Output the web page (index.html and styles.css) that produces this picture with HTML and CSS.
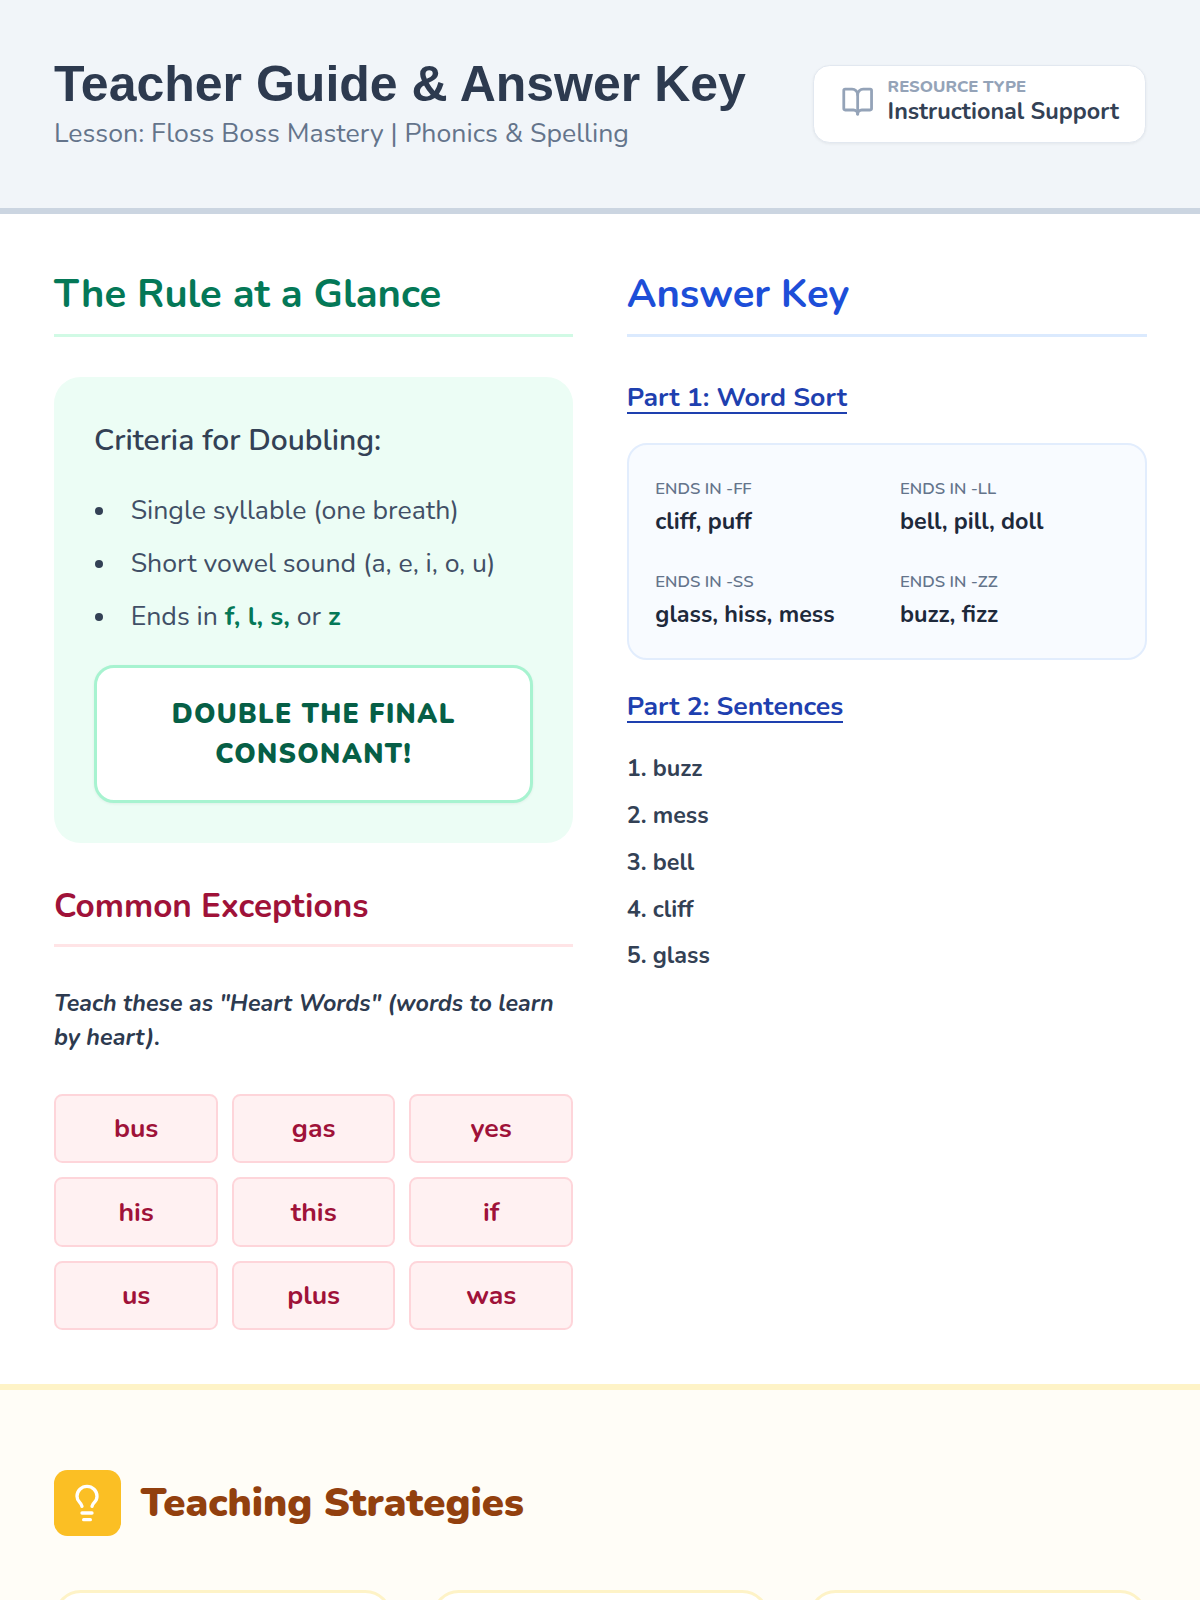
FILE: index.html
```html
<!DOCTYPE html>
<html lang="en">
<head>
<meta charset="utf-8">
<title>Teacher Guide</title>
<link rel="stylesheet" href="styles.css">
</head>
<body>
<header class="header">
  <div class="header-text">
    <h1 class="title">Teacher Guide &amp; Answer Key</h1>
    <p class="subtitle">Lesson: Floss Boss Mastery | Phonics &amp; Spelling</p>
  </div>
  <div class="badge">
    <svg class="badge-icon" viewBox="0 0 24 24" fill="none" stroke="currentColor" stroke-width="2" stroke-linecap="round" stroke-linejoin="round"><path d="M12 7v14"/><path d="M3 18a1 1 0 0 1-1-1V4a1 1 0 0 1 1-1h5a4 4 0 0 1 4 4 4 4 0 0 1 4-4h5a1 1 0 0 1 1 1v13a1 1 0 0 1-1 1h-6a3 3 0 0 0-3 3 3 3 0 0 0-3-3z"/></svg>
    <div>
      <div class="badge-label">RESOURCE TYPE</div>
      <div class="badge-value">Instructional Support</div>
    </div>
  </div>
</header>
<main class="columns">
  <section class="col">
    <h2 class="sec-title green">The Rule at a Glance</h2>
    <div class="rule-box">
      <p class="rule-head">Criteria for Doubling:</p>
      <ul class="rule-list">
        <li>Single syllable (one breath)</li>
        <li>Short vowel sound (a, e, i, o, u)</li>
        <li>Ends in <b>f, l, s,</b> or <b>z</b></li>
      </ul>
      <div class="callout">DOUBLE THE FINAL CONSONANT!</div>
    </div>
    <h2 class="sec-title small rose">Common Exceptions</h2>
    <p class="note">Teach these as "Heart Words" (words to learn by heart).</p>
    <div class="chips">
      <div class="chip">bus</div><div class="chip">gas</div><div class="chip">yes</div>
      <div class="chip">his</div><div class="chip">this</div><div class="chip">if</div>
      <div class="chip">us</div><div class="chip">plus</div><div class="chip">was</div>
    </div>
  </section>
  <section class="col">
    <h2 class="sec-title blue">Answer Key</h2>
    <h3 class="part part-first"><span>Part 1: Word Sort</span></h3>
    <div class="sort">
      <div><div class="sort-label">ENDS IN -FF</div><div class="sort-value">cliff, puff</div></div>
      <div><div class="sort-label">ENDS IN -LL</div><div class="sort-value">bell, pill, doll</div></div>
      <div><div class="sort-label">ENDS IN -SS</div><div class="sort-value">glass, hiss, mess</div></div>
      <div><div class="sort-label">ENDS IN -ZZ</div><div class="sort-value">buzz, fizz</div></div>
    </div>
    <h3 class="part part-second"><span>Part 2: Sentences</span></h3>
    <ol class="answers">
      <li>1. buzz</li><li>2. mess</li><li>3. bell</li><li>4. cliff</li><li>5. glass</li>
    </ol>
  </section>
</main>
<footer class="strategies">
  <div class="strat-head">
    <div class="strat-icon">
      <svg viewBox="0 0 24 24" fill="none" stroke="currentColor" stroke-width="2" stroke-linecap="round" stroke-linejoin="round"><path d="M15 14c.2-1 .7-1.7 1.5-2.5 1-.9 1.5-2.2 1.5-3.5A6 6 0 0 0 6 8c0 1 .2 2.2 1.5 3.5.7.7 1.3 1.5 1.5 2.5"/><path d="M9 18h6"/><path d="M10 22h4"/></svg>
    </div>
    <h2 class="strat-title">Teaching Strategies</h2>
  </div>
  <div class="cards">
    <div class="card"></div><div class="card"></div><div class="card"></div>
  </div>
</footer>
</body>
</html>
```
FILE: styles.css
```css
* { box-sizing: border-box; }
html { font-size: 16.6667px; }
html, body { margin: 0; padding: 0; }
body { font-family: "Nunito", "Noto Sans", sans-serif; background: #fff; color: #334155; width: 1200px; }
h1, h2, h3, p, ul, ol { margin: 0; padding: 0; }
.header { background: #f1f5f9; border-bottom: 6px solid #cbd5e1; padding: 53.33px 54px; display: flex; align-items: center; justify-content: space-between; }
.header-text { padding: 1px 0 2.76px; }
.title { font-family: "Liberation Sans", Arial, sans-serif; font-size: 3rem; line-height: 1.2; font-weight: 700; color: #2d3a4f; }
.subtitle { font-size: 1.6rem; color: #64748b; margin-top: 1.17px; }
.badge { display: flex; align-items: center; gap: .8rem; background: #fff; border: 1px solid #e2e8f0; border-radius: 1rem; padding: 11.5px 26px 15.7px 1.6rem; box-shadow: 0 1px 3px rgba(0,0,0,.06); }
.badge-icon { width: 2rem; height: 2rem; color: #94a3b8; }
.badge-label { font-size: 1rem; line-height: 20px; font-weight: 800; color: #94a3b8; }
.badge-value { font-size: 1.4rem; line-height: 28.5px; font-weight: 700; color: #334155; }
.columns { display: grid; grid-template-columns: 519.33px 520px; gap: 53.33px; padding: 3.2rem 53.33px 3.2rem 54px; }
.sec-title { font-size: 2.4rem; font-weight: 700; padding-bottom: .8rem; border-bottom: 3px solid; }
.green { color: #047857; border-color: #d1fae5; }
.blue { color: #1d4ed8; border-color: #dbeafe; }
.rose { color: #9f1239; border-color: #ffe4e6; }
.small { font-size: 2rem; margin-top: 2.4rem; padding-bottom: 15px; }
.rule-box { margin-top: 2.4rem; background: #ecfdf5; border-radius: 1.6rem; padding: 2.4rem; }
.rule-head { margin-top: 3px; font-size: 1.8rem; font-weight: 600; color: #334155; }
.rule-list { list-style: none; margin-top: 22.5px; }
.rule-list li { font-size: 1.6rem; line-height: 53px; padding-left: 36.67px; position: relative; color: #414f66; }
.rule-list li::before { content: ""; position: absolute; left: 1px; top: 23.5px; width: 8px; height: 8px; border-radius: 50%; background: #334155; }
.rule-list b { color: #047857; font-weight: 700; }
.callout { margin-top: 22.4px; background: #fff; border: 3px solid #a7f3d0; border-radius: 1.2rem; padding: 25.85px 2.4rem; text-align: center; font-size: 1.6rem; line-height: 40px; font-weight: 900; letter-spacing: .05em; color: #065f46; box-shadow: 0 1px 3px rgba(0,0,0,.06); }
.note { margin-top: 38.75px; font-size: 1.4rem; line-height: 34px; font-style: italic; font-weight: 700; color: #2d3a4f; }
.chips { margin-top: 40.25px; display: grid; grid-template-columns: 164.4fr 163fr 164.4fr; gap: 14.33px 14px; }
.chip { height: 69.33px; padding-bottom: 1px; display: flex; align-items: center; justify-content: center; background: #fff1f2; border: 2px solid #fed5da; border-radius: .5rem; color: #9f1239; font-size: 1.6rem; font-weight: 700; }
.part { font-size: 1.6rem; font-weight: 700; color: #1e40af; }
.part span { display: inline-block; line-height: 30px; border-bottom: 2px solid #1e40af; }
.part-first { margin-top: 42px; }
.part-second { margin-top: 28.9px; }
.sort { margin-top: 27.3px; background: #f8fbff; border: 2px solid #e2edfd; border-radius: 1.2rem; padding: 32.5px 1.6rem 27.2px; display: grid; grid-template-columns: 1fr 1fr; gap: 33.3px 1.6rem; }
.sort-label { font-size: 1rem; color: #64748b; font-weight: 600; }
.sort-value { margin-top: 5px; font-size: 1.4rem; font-weight: 700; color: #1e293b; }
.answers { list-style: none; margin-top: 21.1px; font-size: 1.4rem; font-weight: 700; color: #334155; }
.answers li { line-height: 46.7px; }
.strategies { background: #fffdf7; border-top: 6px solid #fef3c7; padding: 4.8rem 53.33px 3.2rem 54px; }
.strat-head { display: flex; align-items: center; gap: 1.2rem; }
.strat-icon { width: 4rem; height: 4rem; background: #fbbf24; border-radius: .8rem; color: #fff; display: flex; align-items: center; justify-content: center; }
.strat-icon svg { width: 2.4rem; height: 2.4rem; }
.strat-title { font-size: 2.4rem; font-weight: 900; color: #92400e; }
.cards { margin-top: 3.2rem; display: grid; grid-template-columns: repeat(3, 1fr); gap: 2.4rem; }
.card { height: 200px; background: #fff; border: 3px solid #fef3c7; border-radius: 1.6rem; }
```
